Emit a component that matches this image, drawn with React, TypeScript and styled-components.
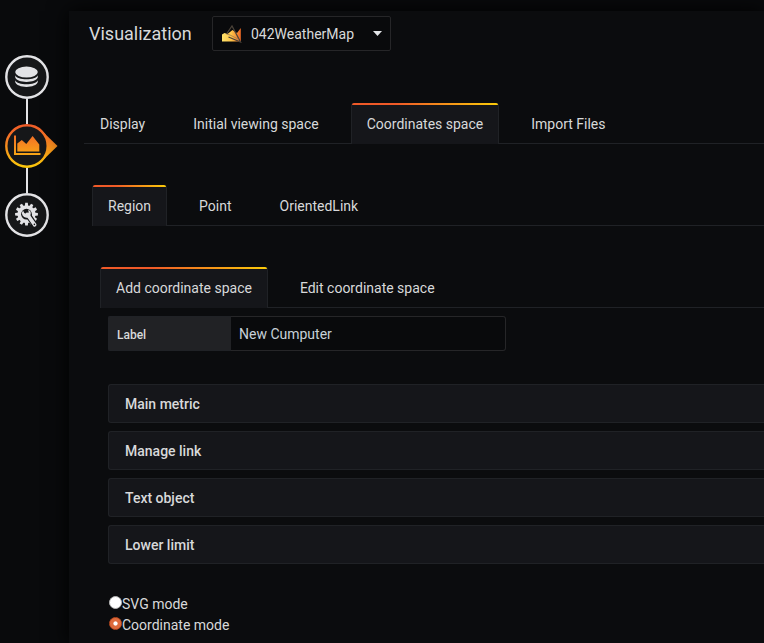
import React, { useState } from 'react';
import styled, { createGlobalStyle, css } from 'styled-components';

const GlobalStyle = createGlobalStyle`
  * { box-sizing: border-box; }
  html, body, #root { height: 100%; }
  body {
    margin: 0;
    overflow: hidden;
    background: #0b0c0e;
    color: #d8d9da;
    font: 400 14px/21px Roboto, sans-serif;
  }
  button, input { font: inherit; color: inherit; }
`;

const Page = styled.div`
  display: flex;
  height: 100%;
  overflow: hidden;
  background: #090a0c;
`;

const Sidebar = styled.nav`
  flex: 0 0 69px;
  display: flex;
  flex-direction: column;
  padding: 55px 0 0 5px;
`;

const Step = styled.button`
  display: block;
  padding: 0;
  border: 0;
  background: none;
  width: 54px;
  height: 44px;

  svg { display: block; overflow: visible; }
`;

const Connector = styled.div`
  width: 2px;
  height: 25px;
  margin-left: 21px;
  background: #e3e3e6;
`;

const Panel = styled.main`
  flex: 1;
  min-width: 0;
  margin-top: 11px;
  padding: 5px 0 0 15px;
  background: #0b0c0e;
  box-shadow: 0 0 20px #000;
  white-space: nowrap;
`;

const Toolbar = styled.header`
  display: flex;
  align-items: center;
  height: 35px;
  padding-left: 5px;
`;

const Title = styled.h1`
  width: 123px;
  margin: 0;
  font-size: 18px;
  font-weight: 400;
`;

const Picker = styled.button`
  display: flex;
  align-items: center;
  width: 179px;
  height: 35px;
  padding: 0 8px 0 9px;
  border: 1px solid #262628;
  border-radius: 2px;
  background: #090a0c;
  text-align: left;
`;

const PickerName = styled.span`
  flex: 1;
  margin-left: 9px;
  padding-top: 2px;
`;

const TabRow = styled.div<{ $level: number }>`
  display: flex;
  height: 41px;
  margin-left: ${(p) => p.$level * 8}px;
  margin-top: ${(p) => (p.$level === 0 ? 52 : 41)}px;
  border-bottom: 1px solid #202226;
`;

const Tab = styled.button<{ $active: boolean }>`
  position: relative;
  height: 41px;
  margin-right: 16px;
  padding: 1px 15px 0;
  border: 1px solid transparent;
  border-bottom: 0;
  border-radius: 3px 3px 0 0;
  background: none;

  ${(p) =>
    p.$active &&
    css`
      border-color: #202226;
      background: #15161a;

      &::before {
        content: '';
        position: absolute;
        top: -1px;
        left: 0;
        right: 0;
        height: 2px;
        border-radius: 2px 2px 0 0;
        background: linear-gradient(to right, #f05a28 30%, #fbca0a 99%);
      }
    `}
`;

const Editor = styled.section`
  padding: 8px 0 0 24px;
`;

const Field = styled.label`
  display: flex;
  width: 398px;
  height: 35px;
`;

const FieldLabel = styled.span`
  width: 123px;
  padding: 2px 9px 0 8px;
  border: 1px solid #202226;
  border-right: 0;
  border-radius: 2px 0 0 2px;
  background: #212225;
  font-size: 12px;
  font-weight: 500;
  line-height: 33px;
`;

const TextInput = styled.input`
  flex: 1;
  min-width: 0;
  padding: 2px 7px 0 8px;
  border: 1px solid #262628;
  border-left: 0;
  border-radius: 0 3px 3px 0;
  outline: 0;
  background: #090a0c;
  color: #c7d0d9;
`;

const Sections = styled.div`
  display: grid;
  gap: 8px;
  margin-top: 33px;
`;

const Section = styled.button`
  height: 39px;
  padding: 2px 16px 0;
  border: 1px solid #202226;
  border-right: 0;
  border-radius: 3px 0 0 3px;
  background: #15161a;
  font-weight: 500;
  text-align: left;
`;

const Modes = styled.div`
  margin-top: 30px;
`;

const Mode = styled.label`
  display: flex;
  height: 21px;
`;

const Radio = styled.input`
  appearance: none;
  width: 13px;
  height: 13px;
  margin: 2px 0 0 1px;
  border: 1px solid #b9b9b9;
  border-radius: 50%;
  background: #fff;

  &:checked {
    border-color: #bd4b20;
    background: radial-gradient(circle, #fff 0 1.7px, #dd6a3c 2.5px);
  }
`;

const light = '#e3e3e6';

function Ring({ color = light }: { color?: string }) {
  return <circle cx="22" cy="22" r="20.7" fill="#161719" stroke={color} strokeWidth="2.4" />;
}

function QueriesIcon() {
  return (
    <svg width="54" height="44">
      <Ring />
      <g fill={light}>
        <ellipse cx="21.5" cy="17.1" rx="11.3" ry="5.5" />
        <path d="M10.2 20.3C12 25.7 31 25.7 32.8 20.3V22.3C31.5 28.5 11.5 28.5 10.2 22.3Z" />
        <path d="M10.2 25.2C12 30.6 31 30.6 32.8 25.2V27.1C31.5 33.5 11.5 33.5 10.2 27.1Z" />
      </g>
    </svg>
  );
}

function VisualizationIcon() {
  return (
    <svg width="54" height="44">
      <defs>
        <linearGradient id="flame" gradientUnits="userSpaceOnUse" x1="0" y1="0" x2="0" y2="44">
          <stop offset="0" stopColor="#f05a28" />
          <stop offset=".3" stopColor="#f37425" />
          <stop offset="1" stopColor="#fbca0a" />
        </linearGradient>
      </defs>
      <path d="M34 4L52.5 22L34 40Z" fill="url(#flame)" />
      <Ring color="url(#flame)" />
      <g fill="url(#flame)">
        <path d="M9 11.5H11V29H35.5V31H9Z" />
        <path d="M12.3 27.6V19.5L16.8 16L21.3 20L27.6 12L34.3 20.5V27.6Z" />
      </g>
    </svg>
  );
}

function GeneralIcon() {
  return (
    <svg width="54" height="44">
      <Ring />
      <g fill={light}>
        <circle cx="21.5" cy="21.2" r="9" />
        {Array.from({ length: 12 }, (_, i) => (
          <path key={i} d="M19.7 14L20.2 9.8H22.8L23.3 14Z" transform={`rotate(${i * 30} 21.5 21.2)`} />
        ))}
      </g>
      <circle cx="21.5" cy="21.2" r="5.4" fill="#161719" />
      <path d="M23 22L30 32.3" stroke="#161719" strokeWidth="5.8" strokeLinecap="round" />
      <path d="M22.2 21.3L29.7 31.9" stroke={light} strokeWidth="3.6" strokeLinecap="round" />
      <path
        d="M18 17.6A4.4 4.4 0 0 0 21.6 24.8A4.3 4.3 0 0 0 25.3 18.3L23.2 16.6L23.7 19.6L21.5 21L19.3 20Z"
        fill={light}
      />
      <circle cx="29.4" cy="31.4" r=".8" fill="#161719" />
    </svg>
  );
}

function WeatherMapLogo() {
  return (
    <svg width="20" height="18" viewBox="0 0 20 18">
      <defs>
        <linearGradient id="hills">
          <stop offset="0" stopColor="#ffe36b" />
          <stop offset=".5" stopColor="#fec449" />
          <stop offset="1" stopColor="#ef6724" />
        </linearGradient>
      </defs>
      <path d="M0 9.5L2.5 8L5.5 9L10.5 5L15 8L18.8 3V16.5H0Z" fill="url(#hills)" />
      <path d="M4.5 9L10 1L18.5 17L6.5 12" fill="none" stroke="#4b4339" strokeWidth="1.25" />
      <path d="M4.5 9L8 10L17 14.5" fill="none" stroke="#9b7850" strokeWidth=".8" />
    </svg>
  );
}

function Caret() {
  return (
    <svg width="9" height="5">
      <path d="M0 0H9L4.5 5Z" fill="#e3e5e8" />
    </svg>
  );
}

const tabRows = [
  { names: ['Display', 'Initial viewing space', 'Coordinates space', 'Import Files'], initial: 2 },
  { names: ['Region', 'Point', 'OrientedLink'], initial: 0 },
  { names: ['Add coordinate space', 'Edit coordinate space'], initial: 0 },
];

const sections = ['Main metric', 'Manage link', 'Text object', 'Lower limit'];

function Tabs({ names, initial, level }: { names: string[]; initial: number; level: number }) {
  const [active, setActive] = useState(initial);
  return (
    <TabRow $level={level} role="tablist">
      {names.map((name, i) => (
        <Tab key={name} role="tab" aria-selected={i === active} $active={i === active} onClick={() => setActive(i)}>
          {name}
        </Tab>
      ))}
    </TabRow>
  );
}

export default function App() {
  const [mode, setMode] = useState('Coordinate mode');
  return (
    <>
      <GlobalStyle />
      <Page>
        <Sidebar>
          <Step aria-label="Queries"><QueriesIcon /></Step>
          <Connector />
          <Step aria-label="Visualization"><VisualizationIcon /></Step>
          <Connector />
          <Step aria-label="General"><GeneralIcon /></Step>
        </Sidebar>
        <Panel>
          <Toolbar>
            <Title>Visualization</Title>
            <Picker>
              <WeatherMapLogo />
              <PickerName>042WeatherMap</PickerName>
              <Caret />
            </Picker>
          </Toolbar>
          {tabRows.map((row, level) => (
            <Tabs key={level} level={level} {...row} />
          ))}
          <Editor>
            <Field>
              <FieldLabel>Label</FieldLabel>
              <TextInput defaultValue="New Cumputer" />
            </Field>
            <Sections>
              {sections.map((name) => (
                <Section key={name}>{name}</Section>
              ))}
            </Sections>
            <Modes>
              {['SVG mode', 'Coordinate mode'].map((name) => (
                <Mode key={name}>
                  <Radio type="radio" name="mode" checked={mode === name} onChange={() => setMode(name)} />
                  {name}
                </Mode>
              ))}
            </Modes>
          </Editor>
        </Panel>
      </Page>
    </>
  );
}
